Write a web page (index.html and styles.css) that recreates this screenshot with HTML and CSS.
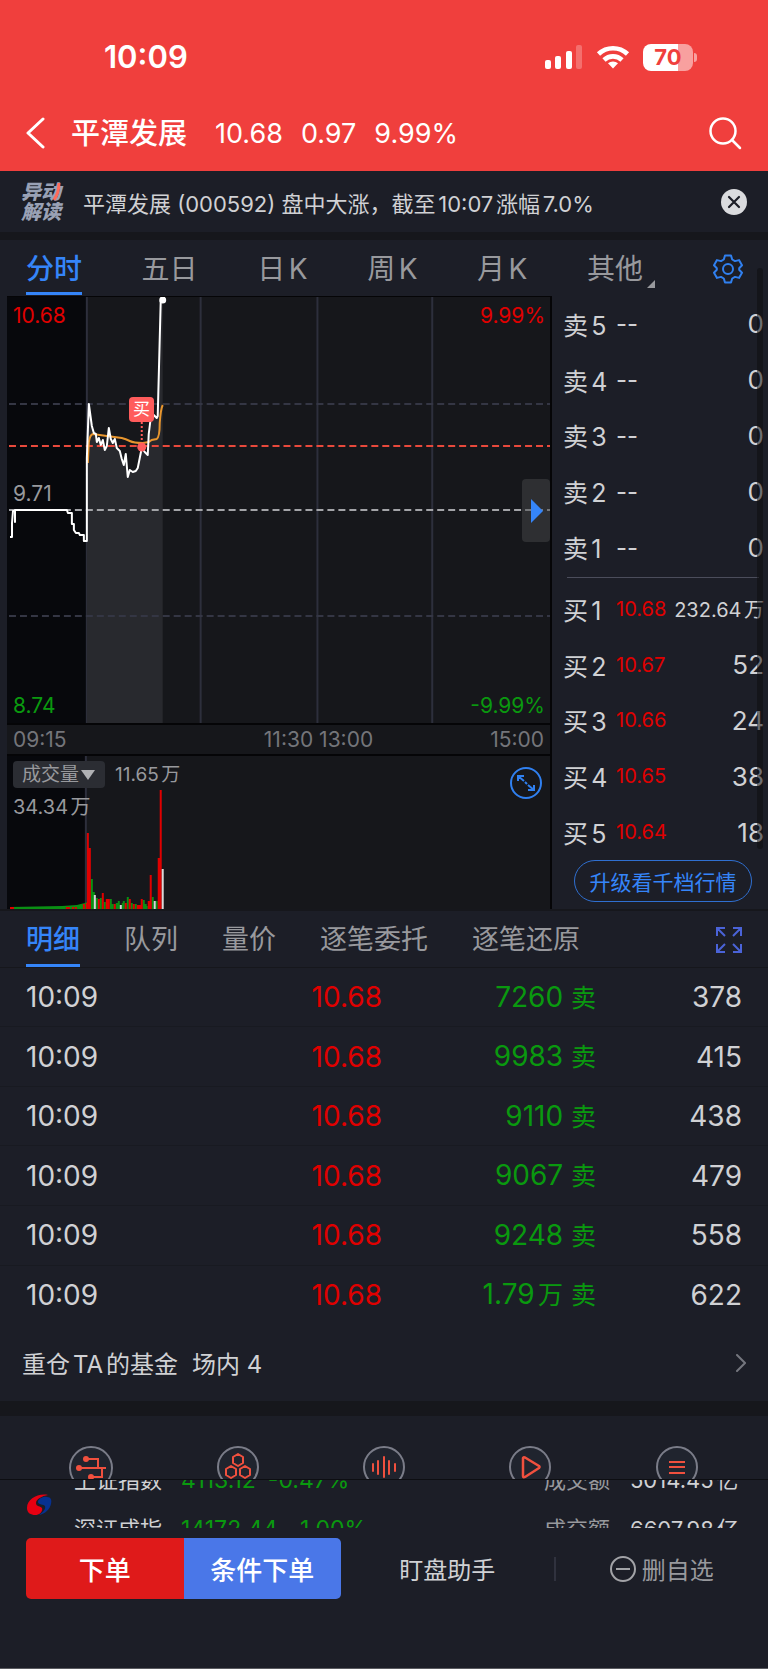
FILE: index.html
```html
<!DOCTYPE html>
<html lang="zh-CN">
<head>
  <meta charset="UTF-8">
  <meta name="viewport" content="width=device-width, initial-scale=1">
  <title>平潭发展 000592</title>
  <link rel="stylesheet" href="styles.css">
</head>
<body>

  <header class="header">
    <div class="status">
      <span class="status-time">10:09</span>
      <div class="status-icons">
        <svg width="38" height="24" viewBox="0 0 38 24" fill="#fff">
          <rect x="0" y="15" width="6" height="9" rx="2"/>
          <rect x="10" y="11" width="6" height="13" rx="2"/>
          <rect x="21" y="6" width="6" height="18" rx="2"/>
          <rect x="31" y="0" width="6" height="24" rx="2" opacity=".25"/>
        </svg>
        <svg width="34" height="24" viewBox="0 0 34 24" fill="none" stroke="#fff" stroke-width="4.6">
          <path d="M2.5 9A21 21 0 0 1 31.500 9"/>
          <path d="M8 15A13 13 0 0 1 26 15"/>
          <path d="M17 23.500l-5-5.200a7.500 7.500 0 0 1 10 0z" fill="#fff" stroke="none"/>
        </svg>
        <div class="battery"><span>70</span></div>
      </div>
    </div>
    <div class="title-bar">
      <a class="back" href="#" aria-label="返回">
        <svg width="20" height="34" viewBox="0 0 20 34" fill="none" stroke="#fff" stroke-width="3" stroke-linecap="round" stroke-linejoin="round"><path d="M17 2L2 16l15 14"/></svg>
      </a>
      <h1>平潭发展</h1>
      <p class="quote-line"><span>10.68</span><span>0.97</span><span>9.99%</span></p>
      <a class="search" href="#" aria-label="搜索">
        <svg width="34" height="34" viewBox="0 0 34 34" fill="none" stroke="#fff" stroke-width="2.500" stroke-linecap="round"><circle cx="15" cy="14" r="12.500"/><path d="M24 23l8 8"/></svg>
      </a>
    </div>
  </header>

  <section class="notice">
    <div class="notice-logo">异动<br>解读
      <svg class="slash" width="8" height="18" viewBox="0 0 8 18" fill="none" stroke="#ff6a5a" stroke-width="3"><path d="M6 0Q6 10 1 17"/></svg>
    </div>
    <p>平潭发展 (000592) 盘中大涨，截至10:07涨幅7.0%</p>
    <button type="button" class="close" aria-label="关闭">
      <svg width="26" height="26" viewBox="0 0 26 26"><circle cx="13" cy="13" r="13" fill="#dadbde"/><path d="M8 8l10 10M18 8L8 18" stroke="#1c1e27" stroke-width="2.200" stroke-linecap="round"/></svg>
    </button>
  </section>

  <main>
    <section class="quote">
      <nav class="tabs period-tabs">
        <div class="period-list">
          <a class="active" href="#">分时</a>
          <a href="#">五日</a>
          <a href="#">日K</a>
          <a href="#">周K</a>
          <a href="#">月K</a>
          <a class="more" href="#">其他</a>
        </div>
        <button type="button" class="settings" aria-label="设置">
          <svg width="30" height="30" viewBox="0 0 30 30" fill="none" stroke="#3080f0" stroke-width="2" stroke-linejoin="round">
            <path d="M12 1.500h6l1.200 4 2.800 1.600 4-1 3 5.200-2.800 2.900v1.600l2.800 2.900-3 5.200-4-1-2.800 1.600-1.200 4h-6l-1.200-4L8 22.900l-4 1-3-5.200 2.800-2.900v-1.600L1 11.300l3-5.200 4 1 2.800-1.600z"/>
            <circle cx="15" cy="15" r="5"/>
          </svg>
        </button>
      </nav>

      <div class="board">
        <div class="charts">
          <div class="plot">
            <svg width="100%" height="426" viewBox="0 0 544 426" preserveAspectRatio="none" fill="none">
              <rect width="80" height="426" fill="#07080c"/>
              <g stroke="#2d2f3c" stroke-width="2">
                <path d="M194 0V426M311 0V426M426 0V426"/>
                <path d="M80 0V426"/>
              </g>
              <path d="M80 426V161L82 107 85 129 87 136 89 137 90 145 92 141 94 148 96 143 98 153 100 149 102 131 104 142 106 146 108 142 110 151 113 154 115 162 117 168 119 157 121 180 123 173 129 174 131 171 133 161 135 151 138 155 141 158 142 137 144 121 147 118 151 119 154 4 156 3V426z" fill="#28292e"/>
              <g stroke="#343644" stroke-width="2" stroke-dasharray="7 4">
                <path d="M2 107H544M2 319H544"/>
              </g>
              <path d="M2 149H544" stroke="#e8493c" stroke-width="2" stroke-dasharray="7 4"/>
              <path d="M2 213H544" stroke="#a3a4a8" stroke-width="2" stroke-dasharray="7 4"/>
              <path d="M81 166L82 145Q83 138 86 137L100 139 115 141Q119 142 123 144T136 146L142 145 145 143 150 142Q153 140 153 126 154 112 156 108" stroke="#e8962e" stroke-width="2"/>
              <path d="M3 240H5V226L6 214H8V225 213H60L61 216H65V227H67V233L69 236H72L73 238H77V244H80V161L82 107 85 129 87 136 89 137 90 145 92 141 94 148 96 143 98 153 100 149 102 131 104 142 106 146 108 142 110 151 113 154 115 162 117 168 119 157 121 180 123 173 126 175 129 174 131 171 133 161 135 151 138 155 141 158 142 137 144 121 147 118 150 121 151 119 154 4 156 3" stroke="#fff" stroke-width="2" stroke-linejoin="round"/>
              <circle cx="156" cy="3" r="3.500" fill="#fff"/>
              <path d="M135 125V145" stroke="#ff5c5c" stroke-width="2" stroke-dasharray="2 2"/>
              <circle cx="135" cy="150" r="4.500" fill="#ff5c5c"/>
            </svg>
            <span class="mark top-left up">10.68</span>
            <span class="mark top-right up">9.99%</span>
            <span class="mark mid-left">9.71</span>
            <span class="mark bottom-left down">8.74</span>
            <span class="mark bottom-right down">-9.99%</span>
            <span class="buy-tag">买</span>
            <button type="button" class="handle" aria-label="收起盘口">
              <svg width="12" height="24" viewBox="0 0 12 24"><path d="M0 0V24L12 12z" fill="#3585f9"/></svg>
            </button>
          </div>

          <div class="time-axis"><span>09:15</span><span class="noon">11:30 13:00</span><span class="end">15:00</span></div>

          <div class="volume">
            <svg width="100%" height="153" viewBox="0 0 544 153" preserveAspectRatio="none" fill="none" stroke-width="2">
              <rect width="79" height="153" fill="#07080c"/>
              <path d="M79 0V153" stroke="#2d2f3c"/>
              <path d="M3 153V151L55 150 70 149 78 147 80 146V153z" fill="#0a8f14"/>
              <path d="M3 152H7M59 152H63M65 152H67M68 152H70M77 153V148M80 153V147" stroke="#e00000"/>
              <path stroke="#0a8f14" d="M85 153v-30M87 153v-17M90 153v-11M94 153v-11M98 153v-7M104 153v-10M106 153v-5M110 153v-6M112 153v-8M116 153v-6M117 153v-8M121 153v-12M125 153v-6M129 153v-5M137 153v-9M139 153v-5M140 153v-3M146 153v-12M150 153v-8"/>
              <path stroke="#e00000" d="M81 153v-76M83 153v-61M92 153v-10M96 153v-16M100 153v-10M102 153v-10M108 153v-5M119 153v-6M123 153v-10M127 153v-5M131 153v-4M133 153v-4M135 153v-10M142 153v-8M144 153v-34M152 153v-51M154 153v-119"/>
              <path stroke="#d8d8d8" d="M88 153v-14M114 153v-4M148 153v-8M156 153v-40"/>
            </svg>
            <div class="volume-head">
              <label class="indicator">
                <select aria-label="副图指标">
                  <option>成交量</option>
                </select>
              </label>
              <span>11.65万</span>
            </div>
            <span class="volume-max">34.34万</span>
            <button type="button" class="expand" aria-label="放大">
              <svg width="32" height="32" viewBox="0 0 32 32" fill="none" stroke="#3080f0" stroke-width="2">
                <circle cx="16" cy="16" r="15"/>
                <path d="M8 14V9h6M8 9l6 5M15 15l2 2M18 18l6 5M24 18v5h-6"/>
              </svg>
            </button>
          </div>
        </div>

        <aside class="order-book">
          <table>
            <tr><th>卖5</th><td class="none">--</td><td class="qty">0</td></tr>
            <tr><th>卖4</th><td class="none">--</td><td class="qty">0</td></tr>
            <tr><th>卖3</th><td class="none">--</td><td class="qty">0</td></tr>
            <tr><th>卖2</th><td class="none">--</td><td class="qty">0</td></tr>
            <tr><th>卖1</th><td class="none">--</td><td class="qty">0</td></tr>
          </table>
          <hr>
          <table>
            <tr><th>买1</th><td class="up">10.68</td><td class="qty long">232.64万</td></tr>
            <tr><th>买2</th><td class="up">10.67</td><td class="qty">52</td></tr>
            <tr><th>买3</th><td class="up">10.66</td><td class="qty">24</td></tr>
            <tr><th>买4</th><td class="up">10.65</td><td class="qty">38</td></tr>
            <tr><th>买5</th><td class="up">10.64</td><td class="qty">18</td></tr>
          </table>
          <button type="button" class="upgrade">升级看千档行情</button>
        </aside>
      </div>
      <div class="scroll-thumb"></div>
    </section>

    <section class="detail">
      <nav class="tabs detail-tabs">
        <a class="active" href="#">明细</a>
        <a href="#">队列</a>
        <a href="#">量价</a>
        <a href="#">逐笔委托</a>
        <a href="#">逐笔还原</a>
        <button type="button" class="full" aria-label="全屏">
          <svg width="26" height="26" viewBox="0 0 26 26" fill="none" stroke="#4a63d8" stroke-width="2">
            <path d="M1 9V1h8M1 1l8 8M17 1h8v8M25 1l-8 8M1 17v8h8M1 25l8-8M25 17v8h-8M25 25l-8-8"/>
          </svg>
        </button>
      </nav>
      <table class="ticks">
        <tr><td>10:09</td><td class="up">10.68</td><td class="down">7260 <i>卖</i></td><td>378</td></tr>
        <tr><td>10:09</td><td class="up">10.68</td><td class="down">9983 <i>卖</i></td><td>415</td></tr>
        <tr><td>10:09</td><td class="up">10.68</td><td class="down">9110 <i>卖</i></td><td>438</td></tr>
        <tr><td>10:09</td><td class="up">10.68</td><td class="down">9067 <i>卖</i></td><td>479</td></tr>
        <tr><td>10:09</td><td class="up">10.68</td><td class="down">9248 <i>卖</i></td><td>558</td></tr>
        <tr><td>10:09</td><td class="up">10.68</td><td class="down">1.79<i>万</i> <i>卖</i></td><td>622</td></tr>
      </table>
    </section>

    <a class="fund" href="#">
      <span>重仓TA的基金</span>
      <span>场内 4</span>
      <svg width="10" height="18" viewBox="0 0 10 18" fill="none" stroke="#74767e" stroke-width="2" stroke-linecap="round"><path d="M1 1l8 8-8 8"/></svg>
    </a>

    <nav class="shortcuts">
      <a href="#" aria-label="产业链">
        <svg width="48" height="48" viewBox="0 0 48 48" fill="none" stroke="#f0503e" stroke-width="2">
          <circle cx="24" cy="25" r="21" fill="#20242e" stroke="#7a7c88"/>
          <path d="M19 16H31V25M12 25H39M35 25V34H24"/>
          <g fill="#f0503e" stroke="none"><circle cx="19" cy="16" r="3"/><circle cx="12" cy="25" r="3"/><circle cx="24" cy="34" r="3"/></g>
        </svg>
      </a>
      <a href="#" aria-label="板块">
        <svg width="48" height="48" viewBox="0 0 48 48" fill="none" stroke="#f0503e" stroke-width="2" stroke-linejoin="round">
          <circle cx="24" cy="24" r="20" fill="#20242e" stroke="#7a7c88"/>
          <path d="M24 11l5 3v6l-5 3-5-3v-6zM17 23l5 3v6l-5 3-5-3v-6zM31 23l5 3v6l-5 3-5-3v-6z"/>
        </svg>
      </a>
      <a href="#" aria-label="异动">
        <svg width="48" height="48" viewBox="0 0 48 48" fill="none" stroke="#f0503e" stroke-width="2" stroke-linecap="round">
          <circle cx="24" cy="24" r="20" fill="#20242e" stroke="#7a7c88"/>
          <path d="M13 21v7M18 18v13M24 14v20M29 18v13M35 21v7"/>
        </svg>
      </a>
      <a href="#" aria-label="直播">
        <svg width="48" height="48" viewBox="0 0 48 48" fill="none" stroke="#f0503e" stroke-width="2.500" stroke-linejoin="round">
          <circle cx="24" cy="24" r="20" fill="#20242e" stroke="#7a7c88" stroke-width="2"/>
          <path d="M17 15q0-1 2-.500l14 8.500q1 1 0 2l-14 9q-2 1-2-1z"/>
        </svg>
      </a>
      <a href="#" aria-label="更多">
        <svg width="48" height="48" viewBox="0 0 48 48" fill="none" stroke="#f0503e" stroke-width="2">
          <circle cx="24" cy="24" r="20" fill="#20242e" stroke="#7a7c88"/>
          <path d="M16 19h16M16 24h16M16 30h16"/>
        </svg>
      </a>
    </nav>
  </main>

  <footer>
    <div class="ticker">
      <svg class="ticker-logo" width="26" height="22" viewBox="0 0 26 22">
        <path d="M22 1C12-1 1 5 1 14c0 5 4 7 8 7 5 0 8-4 7-7-1-2-6-1-6-5 0-4 6-7 12-8z" fill="#e60012"/>
        <path d="M12 8c0-3 5-6 9-5 4 0 5 3 4 7-1 5-6 10-12 11 4-3 7-6 6-9-1-2-7-1-7-4z" fill="#073190"/>
      </svg>
      <div class="ticker-rows">
        <div class="ticker-row"><span class="index">上证指数</span><span class="change down"><span>4113.12</span><span>-0.47%</span></span><span class="turnover">成交额</span><span class="amount">5014.45亿</span></div>
        <div class="ticker-row"><span class="index">深证成指</span><span class="change down"><span>14172.44</span><span>-1.00%</span></span><span class="turnover">成交额</span><span class="amount">6607.98亿</span></div>
      </div>
    </div>
    <div class="actions">
      <div class="order-buttons">
        <button type="button" class="order">下单</button>
        <button type="button" class="order conditional">条件下单</button>
      </div>
      <button type="button" class="action">盯盘助手</button>
      <span class="divider"></span>
      <button type="button" class="action remove">
        <svg width="26" height="26" viewBox="0 0 26 26" fill="none" stroke="#a2a3a7" stroke-width="2"><circle cx="13" cy="13" r="12"/><path d="M6 13h14"/></svg>
        删自选
      </button>
    </div>
  </footer>

</body>
</html>
```
FILE: styles.css
```css
* { box-sizing: border-box; }
body {
  margin: 0;
  background: #1c1e27;
  color: #d0d1d4;
  font-family: Inter, "Noto Sans CJK SC", sans-serif;
  text-autospace: normal;
  border-bottom: 1px solid #5a5b60;
}
h1, p { margin: 0; }
a { color: inherit; text-decoration: none; }
button {
  background: none;
  border: none;
  padding: 0;
  color: inherit;
  font-family: inherit;
  cursor: pointer;
}
svg { display: block; }
table { border-collapse: collapse; width: 100%; }
td, th { padding: 0; font-weight: normal; }
.up { color: #e00000; }
.down { color: #0a990f; }

/* header */
.header { background: #f03f3d; color: #fff; height: 171px; }
.status {
  display: flex;
  justify-content: space-between;
  align-items: center;
  padding: 37px 75px 0 104px;
}
.status-time { font-size: 31px; line-height: 40px; font-weight: 600; }
.status-icons { display: flex; align-items: center; gap: 13px; }
.battery {
  position: relative;
  width: 50px;
  height: 27px;
  border-radius: 8px;
  background: linear-gradient(90deg, #fff 70%, #f8a09f 70%);
  color: #f03f3d;
  font-size: 22px;
  line-height: 27px;
  font-weight: 700;
  text-align: center;
}
.battery::after {
  content: "";
  position: absolute;
  left: 51px;
  top: 9px;
  width: 3px;
  height: 9px;
  border-radius: 0 3px 3px 0;
  background: #f8a09f;
}
.title-bar { display: flex; align-items: center; height: 40px; margin-top: 37px; padding: 0 26px; }
.title-bar h1 { font-size: 29px; line-height: 40px; font-weight: 500; margin-left: 25px; }
.quote-line { display: flex; gap: 18px; margin-left: 28px; font-size: 27px; line-height: 40px; }
.search { margin-left: auto; }

/* notice */
.notice {
  display: flex;
  align-items: center;
  height: 69px;
  padding: 0 21px;
  border-bottom: 8px solid #16171c;
}
.notice-logo {
  position: relative;
  width: 44px;
  color: #99a1b5;
  font-size: 20px;
  line-height: 20px;
  font-weight: 900;
  font-style: italic;
}
.slash { position: absolute; right: 4px; top: 1px; }
.notice p { margin-left: 18px; font-size: 22px; white-space: nowrap; }
.close { margin-left: auto; }

/* tabs */
.tabs { display: flex; align-items: center; height: 56px; padding: 2px 26px 0; font-size: 28px; line-height: 54px; color: #98999d; }
.tabs a { position: relative; }
.tabs .active { color: #3585f9; font-weight: 500; }
.tabs .active::after {
  content: "";
  position: absolute;
  left: 0;
  right: 0;
  bottom: 1px;
  height: 3px;
  background: #3585f9;
}
.period-tabs { padding-right: 25px; }
.period-list { display: flex; flex: 1; justify-content: space-between; }
.more::after {
  content: "";
  position: absolute;
  right: -12px;
  bottom: 8px;
  border: 4px solid transparent;
  border-right-color: #98999d;
  border-bottom-color: #98999d;
}
.settings { margin-left: 70px; }

/* charts */
.quote { position: relative; }
.board { display: grid; grid-template-columns: minmax(0, 1fr) 216px; border-bottom: 2px solid #16171c; }
.charts { margin-left: 7px; background: #16171b; border-top: 1px solid #050507; border-right: 2px solid #050507; }
.plot { position: relative; }
.mark { position: absolute; font-size: 21px; line-height: 24px; color: #98999d; }
.mark.up { color: #e00000; }
.mark.down { color: #0a990f; }
.top-left { left: 6px; top: 7px; }
.top-right { right: 5px; top: 7px; }
.mid-left { left: 6px; top: 185px; }
.bottom-left { left: 6px; bottom: 5px; }
.bottom-right { right: 5px; bottom: 5px; }
.buy-tag {
  position: absolute;
  left: 122px;
  top: 100px;
  width: 25px;
  height: 25px;
  border-radius: 4px;
  background: #ff5c5c;
  color: #fff;
  font-size: 17px;
  line-height: 25px;
  text-align: center;
}
.handle {
  position: absolute;
  right: 0;
  top: 182px;
  width: 28px;
  height: 63px;
  padding-left: 9px;
  border-radius: 4px;
  background: rgba(70, 71, 74, .5);
}
.time-axis {
  display: grid;
  grid-template-columns: 80px 1fr;
  height: 33px;
  border: solid #050507;
  border-width: 2px 0;
  font-size: 21px;
  line-height: 29px;
  color: #74757a;
}
.time-axis span { padding: 0 6px; }
.time-axis .noon { grid-area: 1 / 2; text-align: center; }
.time-axis .end { grid-area: 1 / 2; text-align: right; }
.volume { position: relative; font-size: 20px; color: #98999d; }
.volume-head { position: absolute; left: 6px; top: 5px; display: flex; align-items: center; gap: 10px; font-size: 19px; line-height: 27px; }
.indicator { position: relative; }
.indicator select {
  display: block;
  appearance: none;
  width: 92px;
  height: 27px;
  padding: 0 0 0 9px;
  border: none;
  border-radius: 4px;
  background: #2b2d33;
  color: #98999d;
  font: inherit;
}
.indicator::after {
  content: "";
  position: absolute;
  right: 10px;
  top: 9px;
  border: 7px solid transparent;
  border-top: 10px solid #b0b1b4;
  border-bottom: none;
}
.volume-max { position: absolute; left: 6px; top: 39px; line-height: 24px; }
.expand { position: absolute; right: 8px; top: 11px; }

/* order book */
.order-book { padding-left: 11px; padding-right: 4px; }
.order-book table { height: 279px; table-layout: fixed; }
.order-book th { width: 53px; text-align: left; font-size: 25px; }
.order-book td { width: 52px; font-size: 20px; }
.order-book .none { font-size: 24px; }
.order-book .qty { width: auto; text-align: right; font-size: 26px; }
.order-book .long { font-size: 20px; white-space: nowrap; }
.order-book hr { height: 1px; margin: 2px 5px 3px 4px; border: none; background: #4b4d5b; }
.upgrade {
  display: block;
  width: 178px;
  height: 42px;
  margin: 0 auto 7px 11px;
  border: 1px solid #2f6fd0;
  border-radius: 21px;
  color: #3585f9;
  font-size: 21px;
}
.scroll-thumb {
  position: absolute;
  right: 5px;
  top: 28px;
  bottom: 62px;
  width: 6px;
  border-radius: 3px;
  background: rgba(12, 12, 14, .5);
}

/* detail */
.detail-tabs { gap: 44px; height: 57px; border-bottom: 1px solid #16171c; font-size: 27px; }
.detail-tabs .active::after { bottom: 0; }
.full { margin-left: auto; }
.ticks { height: 356px; table-layout: fixed; font-size: 28px; line-height: 40px; }
.ticks tr { border-bottom: 1px solid #181a21; }
.ticks tr:last-child { border-bottom: none; }
.ticks td { text-align: right; }
.ticks td:nth-child(1) { width: 28%; text-align: left; padding-left: 26px; }
.ticks td:nth-child(2) { width: 22%; padding-right: 2px; }
.ticks td:nth-child(3) { width: 28%; padding-right: 3px; }
.ticks td:nth-child(4) { padding-right: 26px; }
.ticks i { font-style: normal; font-size: 25px; }
.fund { display: flex; align-items: center; gap: 14px; height: 92px; padding: 0 22px; font-size: 24px; border-bottom: 15px solid #16171c; }
.fund svg { margin-left: auto; }
.shortcuts {
  display: grid;
  grid-template-columns: repeat(5, 1fr);
  justify-items: center;
  height: 64px;
  padding: 27px 18px 0;
  border-bottom: 1px solid #0d0e12;
  overflow: hidden;
}

/* bottom */
.ticker { display: flex; align-items: center; height: 48px; padding: 2px 26px 0; overflow: hidden; }
.ticker-rows { flex: 1; margin-left: 22px; }
.ticker-row { display: flex; font-size: 22px; line-height: 49px; white-space: nowrap; }
.index { width: 107px; }
.change { display: flex; gap: 12px; font-size: 23px; }
.turnover { width: 86px; margin-left: auto; color: #98999d; }
.amount { width: 112px; }
.actions {
  display: grid;
  grid-template-columns: 315px 1fr 2px 1fr;
  align-items: center;
  padding: 10px 0 69px 26px;
}
.order-buttons { display: flex; border-radius: 5px; overflow: hidden; }
.order { flex: 1; height: 61px; background: #df1a1a; color: #fff; font-size: 26px; font-weight: 500; }
.conditional { background: #4a77e8; }
.action { font-size: 24px; }
.divider { height: 24px; background: #30323e; }
.remove { display: flex; justify-content: center; align-items: center; gap: 6px; color: #98999d; }
```
